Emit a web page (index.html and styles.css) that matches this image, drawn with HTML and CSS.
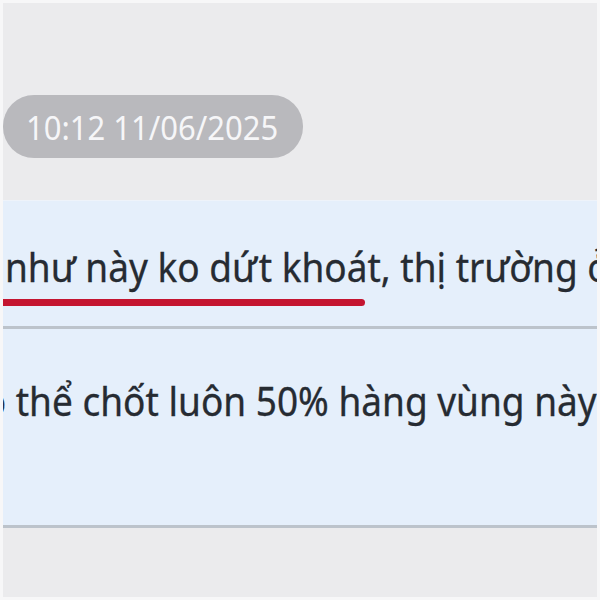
FILE: index.html
```html
<!DOCTYPE html>
<html lang="vi">
<head>
  <meta charset="UTF-8">
  <meta name="viewport" content="width=device-width, initial-scale=1.0">
  <title>Tin nhắn</title>
  <link rel="stylesheet" href="styles.css">
</head>
<body>
  <div class="chat">
    <div class="time-row">
      <span class="time"><span class="time-text">10:12 11/06/2025</span></span>
    </div>

    <div class="bubble first">
      <p class="msg"><span class="line">như này ko dứt khoát, thị trường ở</span></p>
      <span class="mark"></span>
    </div>

    <div class="bubble second">
      <p class="msg shifted"><span class="line">có thể chốt luôn 50% hàng vùng này</span></p>
    </div>
  </div>
</body>
</html>
```

FILE: styles.css
```css
html, body {
  margin: 0;
  padding: 0;
}
body {
  background: #fafafa;
  font-family: "Noto Sans", "Open Sans", sans-serif;
}
.chat {
  box-sizing: border-box;
  width: 600px;
  height: 600px;
  border: 3px solid #f7f7f8;
  background: #ebebed;
  padding-top: 92px;
  overflow: hidden;
}
.time-row {
  display: flex;
}
.time {
  display: flex;
  align-items: center;
  height: 63px;
  width: 300px;
  box-sizing: border-box;
  padding-left: 23px;
  border-radius: 31px;
  background: #b9b9bd;
  color: #f6f6f8;
  font-size: 31px;
}
.time-text {
  display: inline-block;
  transform: scaleY(1.08);
}
.bubble {
  position: relative;
  background: #e5effb;
  border-bottom: 3px solid #bcc3cb;
  overflow: hidden;
}
.first {
  margin-top: 42px;
  height: 125px;
  border-top: 1px solid #eef3fa;
}
.second {
  height: 196px;
}
.msg {
  margin: 0;
  padding-left: 2px;
  white-space: nowrap;
  color: #262b32;
  font-size: 37px;
  line-height: 40px;
  -webkit-text-stroke: 0.3px #262b32;
}
.first .msg {
  padding-top: 46px;
}
.second .msg {
  padding-top: 52px;
}
.shifted {
  margin-left: -39px;
}
.line {
  display: inline-block;
  transform: scaleY(1.08);
}
.mark {
  position: absolute;
  left: -6px;
  top: 98px;
  width: 368px;
  height: 7px;
  border-radius: 4px;
  background: #c41530;
}
```
